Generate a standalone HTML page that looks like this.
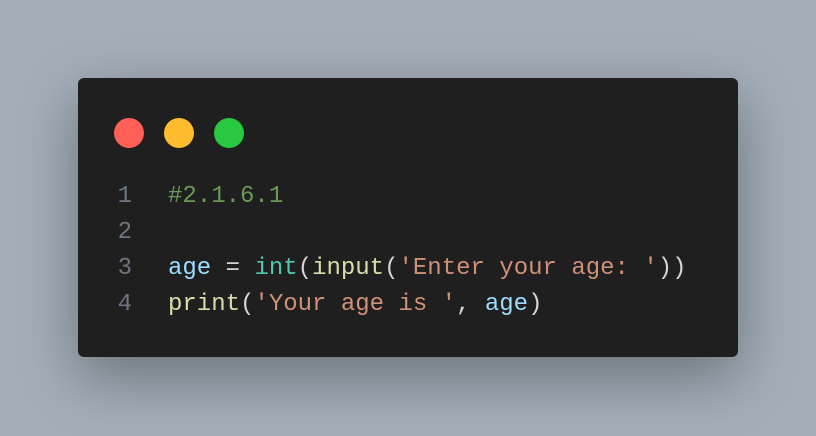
<!DOCTYPE html>
<html><head><style>
html,body{margin:0;padding:0;}
body{width:816px;height:436px;background:#a4aeb9;position:relative;overflow:hidden;font-family:"Liberation Mono","DejaVu Sans Mono",monospace;}
.win{position:absolute;left:78px;top:78px;width:660px;height:279px;background:#1f1f1f;border-radius:6px;box-shadow:0 20px 60px rgba(0,0,0,0.35);}
.dot{position:absolute;top:40px;width:30px;height:30px;border-radius:50%;}
.code{position:absolute;left:0;top:101px;font-size:24px;line-height:36px;color:#d4d4d4;white-space:pre;}
.ln{display:inline-block;width:54px;text-align:right;color:#6e7681;margin-right:36px;}
.c{color:#6a9955}.v{color:#9cdcfe}.t{color:#4ec9b0}.f{color:#dcdcaa}.s{color:#ce9178}
</style></head><body>
<div class="win">
<div class="dot" style="left:36px;background:#ff5f57"></div>
<div class="dot" style="left:86px;background:#febc2e"></div>
<div class="dot" style="left:136px;background:#28c840"></div>
<div class="code"><div><span class="ln">1</span><span class="c">#2.1.6.1</span></div><div><span class="ln">2</span></div><div><span class="ln">3</span><span class="v">age</span> = <span class="t">int</span>(<span class="f">input</span>(<span class="s">'Enter your age: '</span>))</div><div><span class="ln">4</span><span class="f">print</span>(<span class="s">'Your age is '</span>, <span class="v">age</span>)</div></div>
</div>
</body></html>
